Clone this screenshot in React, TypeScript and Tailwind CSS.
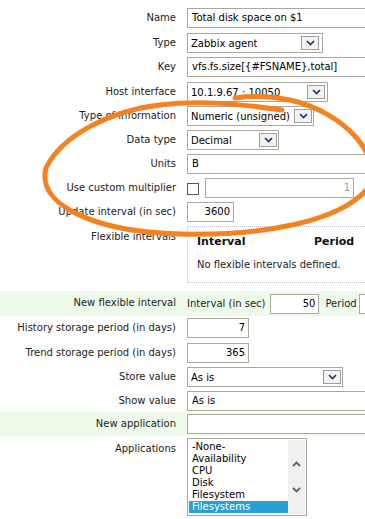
import type { ReactNode } from "react";

const border = "border border-[#aca899]";

function Row({
  label,
  children,
  h,
  green = false,
  labelTop = false,
}: {
  label: string;
  children: ReactNode;
  h: string;
  green?: boolean;
  labelTop?: boolean;
}) {
  return (
    <div className={`flex ${h} ${green ? "bg-[#eefbea]" : ""}`}>
      <div
        className={`w-[176px] shrink-0 text-right text-[#222] ${
          labelTop ? "pt-[7px] leading-[12px]" : "pt-[2px] leading-[20px]"
        }`}
      >
        {label}
      </div>
      <div className="ml-[11px] flex items-start pt-[2px]">{children}</div>
    </div>
  );
}

function Chevron() {
  return (
    <svg width="9" height="6" viewBox="0 0 9 6">
      <path d="M1 1 L4.5 4.5 L8 1" fill="none" stroke="#1d2f5c" strokeWidth="1.6" />
    </svg>
  );
}

function Select({ value, w, btnRight = 2 }: { value: string; w: string; btnRight?: number }) {
  return (
    <div className={`${border} ${w} h-[20px] flex items-center justify-between bg-white pl-[3px]`}>
      <span className="text-black whitespace-nowrap overflow-hidden">{value}</span>
      <span
        className="w-[18px] h-[14px] shrink-0 flex items-center justify-center bg-[#f3f3f3] border border-[#9e9e9e]"
        style={{ marginRight: btnRight }}
      >
        <Chevron />
      </span>
    </div>
  );
}

function Input({
  value = "",
  w,
  right = false,
  gray = false,
}: {
  value?: string;
  w: string;
  right?: boolean;
  gray?: boolean;
}) {
  return (
    <div
      className={`${border} ${w} h-[20px] shrink-0 bg-white leading-[18px] whitespace-nowrap overflow-hidden ${
        right ? "text-right pr-[3px]" : "pl-[4px]"
      } ${gray ? "text-[#9a9a9a]" : "text-black"}`}
    >
      {value}
    </div>
  );
}

export default function App() {
  const apps = ["-None-", "Availability", "CPU", "Disk", "Filesystem", "Filesystems"];
  return (
    <div className="relative w-[365px] h-[519px] overflow-hidden bg-white font-['DejaVu_Sans',sans-serif] text-[10px]">
      <div className="pt-[6px] w-[600px]">
        <Row label="Name" h="h-[25px]">
          <Input value="Total disk space on $1" w="w-[250px]" />
        </Row>
        <Row label="Type" h="h-[24px]">
          <Select value="Zabbix agent" w="w-[136px]" btnRight={3} />
        </Row>
        <Row label="Key" h="h-[25px]">
          <Input value="vfs.fs.size[{#FSNAME},total]" w="w-[250px]" />
        </Row>
        <Row label="Host interface" h="h-[24px]">
          <Select value="10.1.9.67 : 10050" w="w-[141px]" btnRight={2} />
        </Row>
        <Row label="Type of information" h="h-[24px]">
          <Select value="Numeric (unsigned)" w="w-[127px]" btnRight={1} />
        </Row>
        <Row label="Data type" h="h-[24px]">
          <Select value="Decimal" w="w-[92px]" btnRight={1} />
        </Row>
        <Row label="Units" h="h-[24px]">
          <Input value="B" w="w-[250px]" />
        </Row>
        <Row label="Use custom multiplier" h="h-[24px]">
          <div className="flex items-center gap-[6px]">
            <span className="w-[12px] h-[12px] mt-[1px] border border-[#555] bg-white" />
            <Input value="1" w="w-[149px]" right gray />
          </div>
        </Row>
        <Row label="Update interval (in sec)" h="h-[24px]">
          <Input value="3600" w="w-[47px]" right />
        </Row>
        <Row label="Flexible intervals" h="h-[67px]" labelTop>
          <div className="w-[250px] h-[57px] border border-dotted border-[#b9bccc] pl-[9px] pt-[8px]">
            <div className="flex font-bold text-[11px] leading-[14px] text-[#111]">
              <span className="w-[117px]">Interval</span>
              <span>Period</span>
            </div>
            <div className="mt-[10px] leading-[12px] text-[#1a1a2a]">No flexible intervals defined.</div>
          </div>
        </Row>
        <Row label="New flexible interval" h="h-[25px]" green>
          <div className="flex items-start">
            <span className="leading-[20px] mt-[1px] text-[#222]">Interval (in sec)</span>
            <div className="ml-[5px] mt-[1px]">
              <Input value="50" w="w-[49px]" right />
            </div>
            <span className="ml-[6px] leading-[20px] mt-[1px] text-[#222]">Period</span>
            <div className="ml-[2px] mt-[1px]">
              <Input w="w-[80px]" />
            </div>
          </div>
        </Row>
        <Row label="History storage period (in days)" h="h-[25px]">
          <Input value="7" w="w-[62px]" right />
        </Row>
        <Row label="Trend storage period (in days)" h="h-[24px]">
          <Input value="365" w="w-[62px]" right />
        </Row>
        <Row label="Store value" h="h-[24px]">
          <Select value="As is" w="w-[156px]" btnRight={1} />
        </Row>
        <Row label="Show value" h="h-[23px]">
          <Input value="As is" w="w-[250px]" />
        </Row>
        <Row label="New application" h="h-[24px]" green>
          <Input w="w-[250px]" />
        </Row>
        <Row label="Applications" h="h-[83px]" labelTop>
          <div className={`${border} w-[120px] h-[78px] flex bg-white`}>
            <div className="flex-1 pt-[2px] pl-[1px]">
              {apps.map((a) => (
                <div
                  key={a}
                  className={`h-[12px] leading-[12px] pl-[3px] ${
                    a === "Filesystems" ? "bg-[#26a0da] text-white" : "text-black"
                  }`}
                >
                  {a}
                </div>
              ))}
            </div>
            <div className="w-[17px] my-[1px] mr-[1px] bg-[#f0f0f0] flex flex-col items-center justify-center gap-[20px]">
              <svg width="9" height="6" viewBox="0 0 9 6">
                <path d="M1 5 L4.5 1.5 L8 5" fill="none" stroke="#606060" strokeWidth="1.8" />
              </svg>
              <svg width="9" height="6" viewBox="0 0 9 6">
                <path d="M1 1 L4.5 4.5 L8 1" fill="none" stroke="#606060" strokeWidth="1.8" />
              </svg>
            </div>
          </div>
        </Row>
      </div>

      {/* hand-drawn highlight loop */}
      <svg
        className="absolute inset-0 pointer-events-none"
        width="365"
        height="519"
        viewBox="0 0 365 519"
      >
        <path
          d="M282 110 C240 104 200 100 160 105 C110 111 62 135 46 168 C36 205 95 232 180 234 C262 236 340 222 368 188 C385 158 345 112 290 100 C270 96 250 96 235 98"
          fill="none"
          stroke="#f58220"
          strokeWidth="5"
          strokeLinecap="round"
        />
      </svg>
    </div>
  );
}
